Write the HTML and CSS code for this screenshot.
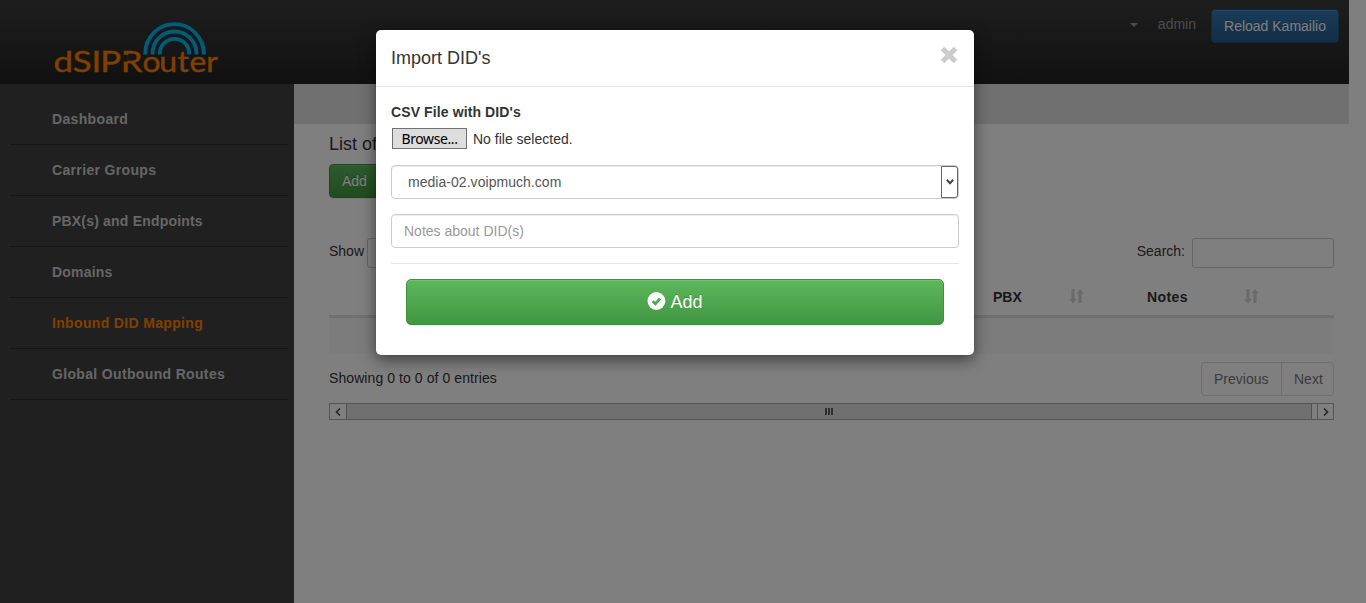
FILE: index.html
```html
<!DOCTYPE html>
<html lang="en">
<head>
<meta charset="utf-8">
<title>dSIPRouter</title>
<link rel="stylesheet" href="styles.css">
</head>
<body>
<div class="page">
  <header class="header">
    <svg class="logo" width="190" height="72" viewBox="0 0 190 72" role="img">
      <g class="arcs">
        <path d="M105.200 42.500V41.500A29.300 29.300 0 0 1 163.800 41.500V42.500"/>
        <path d="M112.500 42.500V41.500A22 22 0 0 1 156.500 41.500V42.500"/>
        <path d="M119.800 42.500V41.500A14.700 14.700 0 0 1 149.200 41.500V42.500"/>
      </g>
      <text class="wordmark" transform="scale(1.2 1)" y="60.500" x="11.200 27.300 42.900 50.300 67.400">dSIPR</text>
      <text class="wordmark" transform="scale(1.1 1)" y="60.500" x="93.100 108.500 125 135.800 151.200">outer</text>
      <path class="notch" d="M85.500 42.800V49.500"/>
    </svg>
    <div class="user">
      <span class="caret"></span>
      <span class="username">admin</span>
      <button class="btn btn-primary">Reload Kamailio</button>
    </div>
  </header>
  <div class="main">
    <nav class="sidebar">
      <a class="nav-item">Dashboard</a>
      <a class="nav-item">Carrier Groups</a>
      <a class="nav-item tight">PBX(s) and Endpoints</a>
      <a class="nav-item tight">Domains</a>
      <a class="nav-item active">Inbound DID Mapping</a>
      <a class="nav-item">Global Outbound Routes</a>
    </nav>
    <section class="content">
      <div class="strip"></div>
      <div class="panel">
        <h4 class="title">List of</h4>
        <button class="btn btn-success">Add</button>
        <div class="filters">
          <label class="filter">Show <span class="box length"></span></label>
          <label class="filter search">Search: <span class="box query"></span></label>
        </div>
        <div class="thead">
          <div class="th pbx"><span>PBX</span><svg class="sort" width="15" height="15" viewBox="0 0 15 15"><path d="M2.500 0H5.500V10H7.500L4 14.500L0 10H2.500ZM9.500 14H12.500V4.500H15L11 0L7.500 4.500H9.500Z"/></svg></div>
          <div class="th notes"><span>Notes</span><svg class="sort" width="15" height="15" viewBox="0 0 15 15"><path d="M2.500 0H5.500V10H7.500L4 14.500L0 10H2.500ZM9.500 14H12.500V4.500H15L11 0L7.500 4.500H9.500Z"/></svg></div>
        </div>
        <div class="row-empty"></div>
        <div class="table-foot">
          <span class="info">Showing 0 to 0 of 0 entries</span>
          <div class="pager"><a class="page-link prev">Previous</a><a class="page-link next">Next</a></div>
        </div>
        <div class="scrollbar">
          <span class="arrow"><svg width="6" height="8" viewBox="0 0 6 8"><path d="M5 0.500L1.500 4L5 7.500"/></svg></span>
          <span class="thumb"><i></i><i></i><i></i></span>
          <span class="arrow end"><svg width="6" height="8" viewBox="0 0 6 8"><path d="M1 0.500L4.500 4L1 7.500"/></svg></span>
        </div>
      </div>
    </section>
  </div>
</div>
<div class="backdrop">
  <div class="modal">
    <div class="modal-head">
      <h4 class="modal-title">Import DID's</h4>
      <svg class="close" width="18" height="18" viewBox="0 0 18 18"><path d="M2.500 2.500L15.500 15.500M15.500 2.500L2.500 15.500"/></svg>
    </div>
    <div class="modal-body">
      <label class="file-label">CSV File with DID's</label>
      <div class="file"><button class="browse">Browse...</button><span>No file selected.</span></div>
      <div class="field select"><span class="select-value">media-02.voipmuch.com</span><span class="select-arrow"><svg width="8" height="6" viewBox="0 0 8 6"><path d="M0.800 0.800L4 4.200L7.200 0.800"/></svg></span></div>
      <div class="field placeholder">Notes about DID(s)</div>
      <div class="modal-foot">
        <button class="btn btn-success btn-lg"><svg class="ok" width="18" height="18" viewBox="0 0 18 18"><circle cx="9.400" cy="9" r="8.900"/><path d="M5.700 9.300L8.400 11.700L13.100 6.500"/></svg>Add</button>
      </div>
    </div>
  </div>
</div>
</body>
</html>
```

FILE: styles.css
```css
* { box-sizing: border-box; }
body {
  margin: 0;
  height: 603px;
  overflow: hidden;
  background: #fff;
  color: #333;
  font: 14px/20px "Liberation Sans", Arial, sans-serif;
}
h4 { margin: 0; font-size: 18px; font-weight: 400; line-height: 20px; }
.page { width: 1349px; height: 603px; display: flex; flex-direction: column; }
.header {
  height: 84px;
  flex: none;
  display: flex;
  justify-content: space-between;
  align-items: flex-start;
  padding: 9px 10px 0 40px;
  background: linear-gradient(#3c3c3c, #222);
}
.logo { margin-top: 3px; overflow: visible; }
.arcs path { fill: none; stroke: #00b8f0; stroke-width: 3.8; }
.wordmark { font: 29px Lato, sans-serif; fill: #ff8000; stroke: #ff8000; stroke-width: .4; }
.notch { stroke: #292929; stroke-width: 4.5; fill: none; }
.user { display: flex; align-items: flex-start; }
.caret { margin: 14px 20px 0 0; border: 4px solid transparent; border-top-color: #999; border-bottom: 0; }
.username { margin: 5px 15px 0 0; color: #999; }
.btn {
  height: 34px;
  padding: 0 12px;
  border: 1px solid;
  border-radius: 4px;
  color: #fff;
  font: inherit;
  text-shadow: 0 -1px 0 rgba(0,0,0,.2);
  box-shadow: inset 0 1px 0 rgba(255,255,255,.15), 0 1px 1px rgba(0,0,0,.075);
}
.btn-primary { width: 128px; background: linear-gradient(#337ab7, #265a88); border-color: #245580; }
.btn-success { background: linear-gradient(#5cb85c, #419641); border-color: #3e8f3e; }
.main { display: flex; flex: 1; }
.sidebar { width: 294px; padding: 10px 6px 0 10px; background: #404040; }
.nav-item {
  display: block;
  height: 51px;
  padding: 15px 0 0 42px;
  border-bottom: 1px solid #2d2d2d;
  color: #ccc;
  font-weight: 700;
  letter-spacing: .34px;
}
.nav-item.tight { letter-spacing: .19px; }
.nav-item.active { color: #ff8000; }
.content { flex: 1; }
.strip { height: 40px; background: #e0e0e0; }
.panel { padding: 10px 15px 0 35px; }
.panel > .btn { display: block; width: 62px; margin-top: 10px; text-align: left; }
.filters { display: flex; justify-content: space-between; margin-top: 40px; }
.filter { display: flex; height: 30px; padding-top: 3px; }
.box { height: 30px; margin-top: -3px; border: 1px solid #ccc; border-radius: 3px; }
.length { width: 75px; margin-left: 3px; }
.query { width: 142px; margin-left: 7px; }
.thead {
  display: flex;
  height: 50px;
  padding: 19px 75px 0 664px;
  border-bottom: 3px solid #e0e0e0;
  font-weight: 700;
}
.th { display: flex; justify-content: space-between; height: 20px; }
.pbx { width: 91px; }
.notes { width: 112px; margin-left: 63px; letter-spacing: .4px; }
.sort { margin-top: 2px; fill: #d4d4d4; }
.row-empty { height: 36px; background: #f9f9f9; }
.table-foot { display: flex; justify-content: space-between; margin-top: 8px; height: 34px; line-height: 32px; }
.info { letter-spacing: .08px; }
.pager { display: flex; border: 1px solid #ddd; border-radius: 4px; color: #777; }
.page-link { padding-left: 12px; }
.prev { width: 79px; }
.next { width: 52px; }
.page-link + .page-link { border-left: 1px solid #ddd; }
.scrollbar { display: flex; height: 17px; margin-top: 7px; border: 1px solid #aaa; }
.arrow { width: 16px; display: flex; align-items: center; justify-content: center; }
.arrow path { fill: none; stroke: #505050; stroke-width: 1.6; }
.arrow.end { border-left: 1px solid #aaa; margin-left: 5px; }
.thumb {
  flex: 1;
  display: flex;
  align-items: center;
  justify-content: center;
  gap: 1px;
  background: #e0e0e0;
  border: solid #a0a0a0;
  border-width: 0 1px;
}
.thumb i { width: 2px; height: 7px; background: #606060; }
.backdrop {
  position: absolute;
  inset: 0;
  padding-top: 30px;
  background: rgba(0,0,0,.5);
}
.modal {
  width: 598px;
  height: 325px;
  margin-left: 376px;
  border-radius: 5px;
  background: #fff;
  box-shadow: 0 5px 15px rgba(0,0,0,.5), 0 0 1px rgba(0,0,0,.4);
}
.modal-head {
  display: flex;
  justify-content: space-between;
  height: 57px;
  padding: 16px 16px 0 15px;
  border-bottom: 1px solid #e5e5e5;
}
.modal-title { line-height: 24px; }
.close { fill: none; stroke: #ccc; stroke-width: 5.2; }
.modal-body { padding: 15px; }
.file-label { display: block; font-weight: 700; letter-spacing: .11px; }
.file { display: flex; height: 22px; margin: 5px 0 16px 1px; line-height: 24px; }
.browse {
  width: 75px;
  height: 21px;
  margin: 1px 6px 0 0;
  padding: 0;
  border: 1px solid #707070;
  background: #ddd;
  color: #000;
  font: 14px/18px "Noto Sans", sans-serif;
  letter-spacing: -.4px;
}
.field {
  height: 34px;
  padding: 6px 12px;
  border: 1px solid #ccc;
  border-radius: 4px;
  box-shadow: inset 0 1px 1px rgba(0,0,0,.075);
  color: #555;
}
.select { display: flex; justify-content: space-between; padding: 0 0 0 16px; margin-bottom: 15px; }
.select-value { padding-top: 6px; letter-spacing: .04px; }
.select-arrow {
  width: 17px;
  display: flex;
  align-items: center;
  justify-content: center;
  border: 1px solid #666;
  border-radius: 0 3px 3px 0;
}
.select-arrow path { fill: none; stroke: #444; stroke-width: 2; }
.placeholder { color: #999; }
.modal-foot { margin-top: 15px; padding: 15px; border-top: 1px solid #e5e5e5; }
.btn-lg {
  display: flex;
  align-items: center;
  justify-content: center;
  gap: 5px;
  width: 100%;
  height: 46px;
  border-radius: 5px;
  font-size: 18px;
}
.ok { margin-top: -3px; fill: #fff; overflow: visible; }
.ok path { fill: none; stroke: #4cab4c; stroke-width: 2.8; }
```
